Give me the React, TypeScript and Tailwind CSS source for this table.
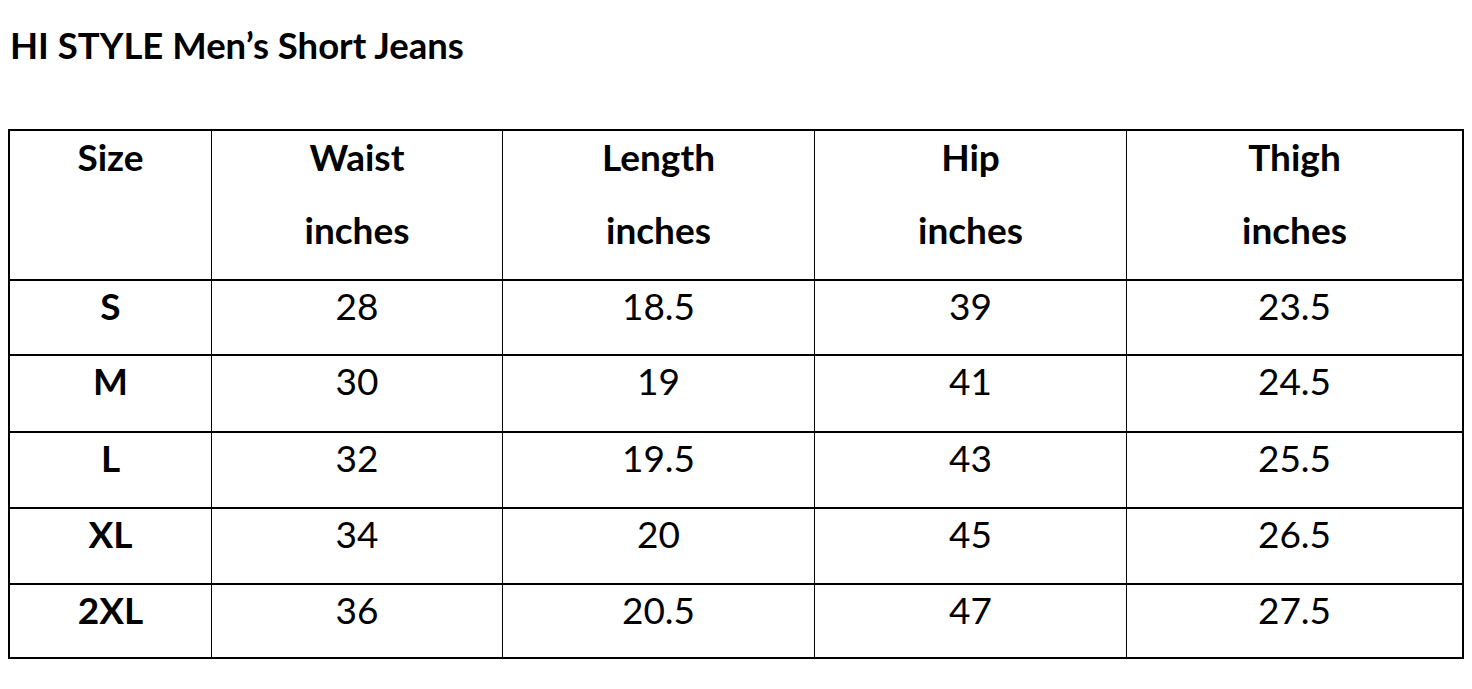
import React from "react";

const cols = ["w-[202px]", "w-[291px]", "w-[312px]", "w-[312px]", "w-[337px]"];

const rows: { h: string; cells: string[] }[] = [
  { h: "h-[75px]", cells: ["S", "28", "18.5", "39", "23.5"] },
  { h: "h-[77px]", cells: ["M", "30", "19", "41", "24.5"] },
  { h: "h-[76px]", cells: ["L", "32", "19.5", "43", "25.5"] },
  { h: "h-[76px]", cells: ["XL", "34", "20", "45", "26.5"] },
  { h: "h-[74px]", cells: ["2XL", "36", "20.5", "47", "27.5"] },
];

const headers: [string, string][] = [
  ["Size", ""],
  ["Waist", "inches"],
  ["Length", "inches"],
  ["Hip", "inches"],
  ["Thigh", "inches"],
];

export default function App() {
  return (
    <div
      className="w-[1472px] h-[689px] bg-white text-black overflow-hidden"
      style={{ fontFamily: "Lato, 'Open Sans', sans-serif" }}
    >
      <div className="pl-[10px] pt-[23px] h-[129px]">
        <h1 className="text-[36.5px] font-bold leading-[44px]">HI STYLE Men’s Short Jeans</h1>
      </div>
      <div className="ml-[8px] w-[1456px] border-l-2 border-t-2 border-black">
        <div className="flex">
          {headers.map(([a, b], i) => (
            <div
              key={i}
              className={`${cols[i]} h-[150px] shrink-0 border-b-2 ${i < 4 ? "border-r" : "border-r-2"} border-black flex flex-col items-center text-[37px] font-bold`}
            >
              <div className="h-[52px] leading-[52px]">{a}</div>
              {b && <div className="mt-[21px] h-[52px] leading-[52px]">{b}</div>}
            </div>
          ))}
        </div>
        {rows.map((r, ri) => (
          <div key={ri} className="flex">
            {r.cells.map((c, i) => (
              <div
                key={i}
                className={`${cols[i]} ${r.h} shrink-0 border-b-2 ${i < 4 ? "border-r" : "border-r-2"} border-black flex justify-center text-[37px] ${i === 0 ? "font-bold" : "font-normal"}`}
              >
                <div className="h-[50px] leading-[50px]">{c}</div>
              </div>
            ))}
          </div>
        ))}
      </div>
    </div>
  );
}
